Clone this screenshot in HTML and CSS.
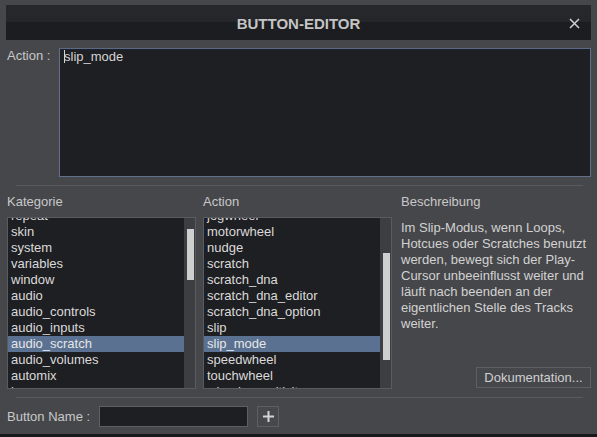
FILE: index.html
```html
<!DOCTYPE html>
<html lang="de">

<head>
    <meta charset="UTF-8">
    <title>Button-Editor</title>
    <link rel="stylesheet" href="styles.css">
</head>

<body>

    <div class="window">
        <!-- Title bar -->
        <div class="titlebar">
            <span></span>
            <span class="title">BUTTON-EDITOR</span>
            <span class="close">
                <svg width="11" height="11" viewBox="0 0 11 11">
                    <path d="M1 1 L10 10 M10 1 L1 10" stroke="#d0d0d0" stroke-width="1.5" fill="none" />
                </svg>
            </span>
        </div>

        <div class="content">
            <!-- Action script -->
            <div class="action-row">
                <label class="action-label">Action :</label>
                <div class="script-box"><span class="caret"></span>slip_mode</div>
            </div>

            <div class="separator"></div>

            <!-- Lists -->
            <div class="columns">
                <div class="col col-cat">
                    <div class="col-head">Kategorie</div>
                    <div class="listbox">
                        <ul class="items">
                            <li>repeat</li>
                            <li>skin</li>
                            <li>system</li>
                            <li>variables</li>
                            <li>window</li>
                            <li>audio</li>
                            <li>audio_controls</li>
                            <li>audio_inputs</li>
                            <li class="selected">audio_scratch</li>
                            <li>audio_volumes</li>
                            <li>automix</li>
                            <li>browser</li>
                        </ul>
                        <div class="track"><div class="thumb thumb-cat"></div></div>
                    </div>
                </div>

                <div class="col col-act">
                    <div class="col-head">Action</div>
                    <div class="listbox">
                        <ul class="items">
                            <li>jogwheel</li>
                            <li>motorwheel</li>
                            <li>nudge</li>
                            <li>scratch</li>
                            <li>scratch_dna</li>
                            <li>scratch_dna_editor</li>
                            <li>scratch_dna_option</li>
                            <li>slip</li>
                            <li class="selected">slip_mode</li>
                            <li>speedwheel</li>
                            <li>touchwheel</li>
                            <li>wheel_sensitivity</li>
                        </ul>
                        <div class="track"><div class="thumb thumb-act"></div></div>
                    </div>
                </div>

                <div class="col col-desc">
                    <div class="col-head">Beschreibung</div>
                    <p class="desc">Im Slip-Modus, wenn Loops, Hotcues oder Scratches benutzt werden, bewegt sich der Play-Cursor unbeeinflusst weiter und läuft nach beenden an der eigentlichen Stelle des Tracks weiter.</p>
                    <button class="doc-btn">Dokumentation...</button>
                </div>
            </div>

            <div class="separator separator-bottom"></div>

            <!-- Button name -->
            <div class="name-row">
                <label class="name-label">Button Name :</label>
                <input class="name-input" type="text">
                <button class="plus-btn">
                    <svg width="11" height="11" viewBox="0 0 11 11">
                        <path d="M5.5 0 V11 M0 5.5 H11" stroke="#d4d4d4" stroke-width="2" fill="none" />
                    </svg>
                </button>
            </div>
        </div>
    </div>

</body>

</html>
```

FILE: styles.css
```css
body {
    margin: 0;
    padding: 0;
    background-color: #46474b;
    font-family: "Liberation Sans", Arial, sans-serif;
    font-size: 13px;
    color: #c8c8c8;
}

.window {
    height: 437px;
    padding-top: 5px;
    box-sizing: border-box;
    border-bottom: 3px solid #18191b;
}

/* Title bar */
.titlebar {
    margin: 0 6px;
    height: 35px;
    display: grid;
    grid-template-columns: 1fr auto 1fr;
    align-items: center;
    background: linear-gradient(#27282c 0%, #25262a 50%, #1c1d20 50%, #1c1d20 100%);
}

.title {
    font-size: 15px;
    font-weight: bold;
    color: #c4c4c4;
    padding-top: 1px;
}

.close {
    justify-self: end;
    padding-right: 11px;
    display: flex;
    padding-top: 1px;
}

.content {
    padding: 0 6px 0 7px;
}

/* Action script */
.action-row {
    display: flex;
    margin-top: 8px;
}

.action-label {
    width: 52px;
    line-height: 16px;
}

.script-box {
    flex: 1;
    height: 125px;
    border: 1px solid #627189;
    border-top-color: #5b6a82;
    background-color: #1e1f22;
    box-shadow: inset 0 2px 0 #1d2029;
    color: #d4d4d4;
    padding: 1px 4px;
    line-height: 14px;
}

.caret {
    display: inline-block;
    width: 1px;
    height: 13px;
    background-color: #d4d4d4;
    vertical-align: -2px;
    margin-right: -1px;
}

.separator {
    height: 1px;
    background-color: #595a5e;
    margin: 8px 8px 0 9px;
}

/* Lists */
.columns {
    display: flex;
    padding-top: 8px;
}

.col {
    display: flex;
    flex-direction: column;
}

.col-cat {
    width: 189px;
    margin-right: 7px;
}

.col-act {
    width: 189px;
}

.col-desc {
    flex: 1;
    margin-left: 9px;
}

.col-head {
    line-height: 16px;
    margin-bottom: 7px;
}

.listbox {
    height: 170px;
    border: 1px solid #5a5b5f;
    background-color: #1e1f22;
    display: flex;
    overflow: hidden;
}

.items {
    flex: 1;
    list-style: none;
    margin: -10px 0 0 0;
    padding: 0;
    color: #dadada;
}

.items li {
    height: 16px;
    line-height: 16px;
    padding-left: 3px;
    white-space: nowrap;
}

.items li.selected {
    background-color: #5a7191;
    color: #e6e6e6;
}

.track {
    width: 7px;
    padding: 0 1px 0 3px;
    background-color: #3d3e42;
}

.thumb {
    background-color: #cfcfd0;
}

.thumb-cat {
    margin-top: 11px;
    height: 51px;
}

.thumb-act {
    margin-top: 35px;
    height: 107px;
}

/* Description */
.desc {
    margin: 3px 0 0 0;
    line-height: 16px;
    color: #d2d2d2;
}

.doc-btn {
    margin-top: auto;
    margin-bottom: 1px;
    align-self: flex-end;
    width: 115px;
    height: 21px;
    background-color: #46474b;
    border: 1px solid #5e5f63;
    color: #d0d0d0;
    font-family: "Liberation Sans", Arial, sans-serif;
    font-size: 13px;
    padding: 0;
}

.separator-bottom {
    margin-top: 8px;
}

/* Button name */
.name-row {
    display: flex;
    align-items: center;
    margin-top: 8px;
}

.name-label {
    width: 92px;
}

.name-input {
    width: 149px;
    height: 21px;
    box-sizing: border-box;
    border: 1px solid #5e5f63;
    background-color: #1e1f22;
    color: #d0d0d0;
    margin: 0;
}

.plus-btn {
    margin-left: 9px;
    width: 22px;
    height: 21px;
    box-sizing: border-box;
    border: 1px solid #5e5f63;
    background-color: #47484c;
    padding: 0;
    display: flex;
    align-items: center;
    justify-content: center;
}
```
